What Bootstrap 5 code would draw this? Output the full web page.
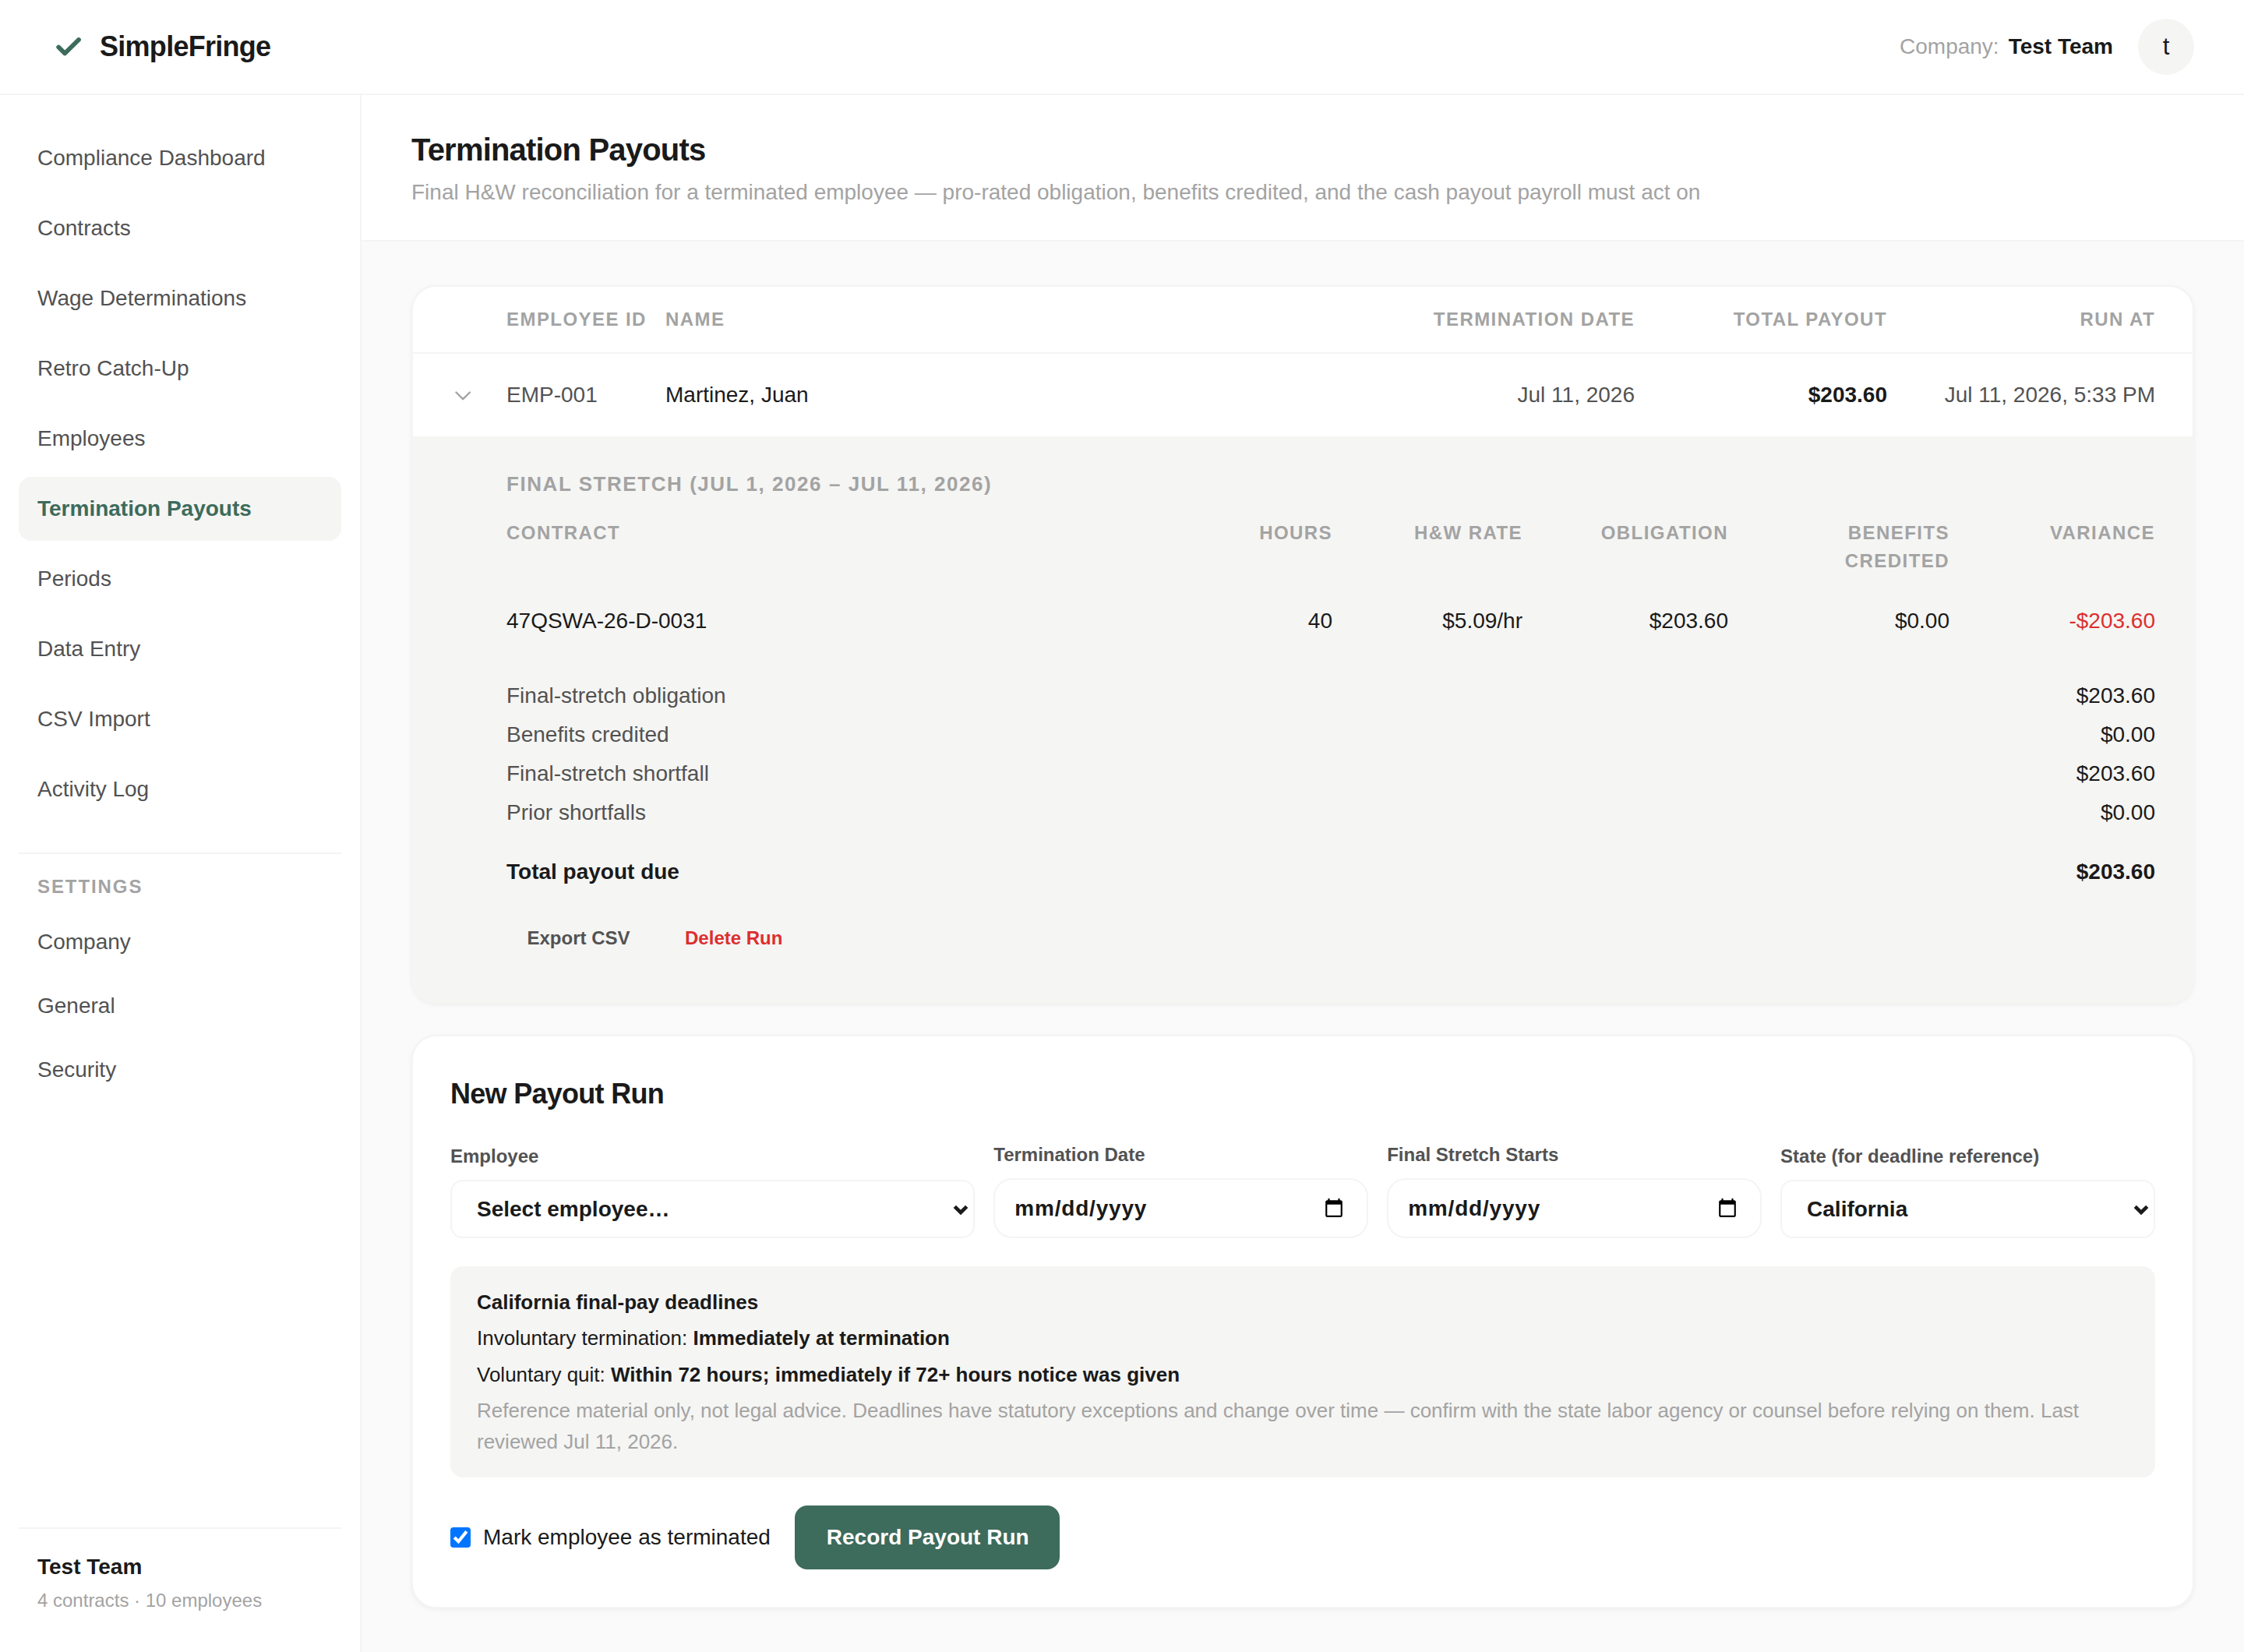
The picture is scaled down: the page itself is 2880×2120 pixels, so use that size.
<!DOCTYPE html>
<html lang="en">
<head>
  <meta charset="UTF-8" />
  <meta name="viewport" content="width=device-width, initial-scale=1" />
  <title>Termination Payouts - SimpleFringe</title>
  <link href="https://cdn.jsdelivr.net/npm/bootstrap@5.3.0/dist/css/bootstrap.min.css" rel="stylesheet" />
  <style>
    :root {
      --ink: #1a1a1a;
      --ink-2: #525252;
      --ink-3: #a3a3a3;
      --line: #f4f4f3;
      --soft: #f5f5f3;
      --green: #3d6b5c;
      --red: #dc2f2f;
    }
    body {
      font-family: "Liberation Sans", Arial, sans-serif;
      font-size: 28px;
      line-height: 42px;
      color: var(--ink);
      background: #fff;
      height: 2120px;
      overflow: hidden;
    }
    .ink-2 { color: var(--ink-2); }
    .ink-3 { color: var(--ink-3); }
    .ink-red { color: var(--red); }

    .topbar { height: 122px; padding: 0 64px; border-bottom: 2px solid var(--line); }
    .brand-name { font-size: 36px; letter-spacing: -.02em; }
    .brand-mark { width: 48px; height: 48px; margin-right: 16px; }
    .avatar { width: 72px; height: 72px; background: var(--soft); font-size: 31px; }

    .sidebar { width: 464px; padding: 40px 24px 0; border-right: 2px solid var(--line); }
    .sidebar .nav-link { color: var(--ink-2); padding: 20px 24px; border-radius: 16px; line-height: 42px; }
    .sidebar .nav-link.active { color: var(--green); background: var(--soft); font-weight: 700; }
    .main-nav { gap: 8px; }
    .settings-nav { margin-top: 40px; border-top: 2px solid var(--line); padding-top: 24px; }
    .settings-title { font-size: 24px; line-height: 36px; letter-spacing: .08em; padding: 0 24px; margin-bottom: 12px; }
    .team-box { height: 160px; padding: 28px 24px 0; border-top: 2px solid var(--line); }
    .team-box small { font-size: 24px; display: block; line-height: 36px; margin-top: 4px; }

    .page-head { height: 188px; padding: 42px 64px 0; border-bottom: 2px solid var(--line); }
    .page-head h1 { font-size: 40px; line-height: 56px; letter-spacing: -.02em; margin: 0 0 6px; }
    .page-body { background: #fafafa; padding: 56px 64px 54px; gap: 40px; }

    .panel { --bs-card-border-radius: 32px; --bs-card-inner-border-radius: 30px; border: 2px solid var(--line); box-shadow: 0 2px 6px rgba(0, 0, 0, .05); color: var(--ink); }

    .run-table, .contract-table { --bs-table-bg: transparent; --bs-table-color: var(--ink); table-layout: fixed; margin: 0; color: var(--ink); }
    .run-table > :not(caption) > * > *, .contract-table > :not(caption) > * > * { border: 0; padding: 0; }
    .run-table th, .contract-table th { font-size: 24px; line-height: 36px; letter-spacing: .06em; color: var(--ink-3); text-transform: uppercase; }
    .run-table th { height: 85px; vertical-align: middle; }
    .run-table thead { border-bottom: 2px solid var(--line); }
    .run-table > tbody > tr > td { height: 107px; vertical-align: middle; }

    .detail { background: var(--soft); height: 726px; padding: 41px 48px 0 120px; border-radius: 0 0 30px 30px; }
    .detail h2 { font-size: 26px; line-height: 40px; letter-spacing: .06em; color: var(--ink-3); text-transform: uppercase; margin: 0 0 25px; }
    .contract-table { margin-bottom: 54px; }
    .contract-table th { height: 110px; vertical-align: top; }
    .contract-table th.wrap-head { padding-left: 48px; }
    .contract-table td { line-height: 42px; }
    .sum-list { gap: 8px; }
    .sum-total { margin-top: 34px; }
    .detail-actions { margin-top: 38px; gap: 16px; }
    .detail-actions .btn { font-size: 24px; line-height: 36px; font-weight: 700; padding: 8px 28px 8px 26.5px; border: 0; }

    .new-run { padding: 48px; }
    .new-run h2 { font-size: 36px; line-height: 51px; letter-spacing: -.02em; margin: 0 0 35px; }
    .field-row { display: grid; grid-template-columns: 1.4fr 1fr 1fr 1fr; gap: 24px; align-items: end; margin-bottom: 36px; }
    .field-row .form-label { display: block; font-size: 24px; line-height: 36px; font-weight: 700; color: var(--ink-2); margin-bottom: 12px; }
    /* native controls drawn at double size */
    .field-row select, .field-row input { zoom: 2; display: block; width: 100%; font-size: 14px; font-weight: 700; color: var(--ink); background: #fff; border: 1px solid var(--line); }
    .field-row select { height: 37.5px; line-height: 35.5px; padding: 0 0 0 16px; border-radius: 8px; appearance: none; }
    .field-row input { height: 38.5px; padding: 0 12px 0 12.5px; border-radius: 12px; letter-spacing: .4px; }
    .select-arrow { position: absolute; right: 7px; top: 27px; width: 22px; height: 22px; pointer-events: none; }

    .deadlines { background: var(--soft); border-radius: 16px; padding: 25.5px 34px; font-size: 26px; line-height: 40px; margin-bottom: 36px; }
    .deadlines p { margin: 0 0 6.5px; }
    .deadlines p:last-child { margin: 0; }
    .mark-box { zoom: 2; width: 13px; height: 13px; margin: 0; accent-color: #0075ff; }
    .btn-record { --bs-btn-bg: var(--green); --bs-btn-color: #fff; --bs-btn-border-width: 0; --bs-btn-border-radius: 16px; font-size: 28px; font-weight: 700; line-height: 42px; padding: 20px 39px 20px 41px; }
  </style>
</head>
<body class="d-flex flex-column">

<header class="topbar d-flex align-items-center justify-content-between flex-shrink-0">
  <div class="d-flex align-items-center">
    <svg class="brand-mark" viewBox="0 0 48 48" fill="none" stroke="#3d6b5c" stroke-width="5.8" stroke-linecap="round" stroke-linejoin="round"><path d="M11.2 24.5l8 8L37 15" /></svg>
    <span class="brand-name fw-bold">SimpleFringe</span>
  </div>
  <div class="d-flex align-items-center">
    <span class="ink-3" style="margin-right:12px">Company:</span>
    <span class="fw-bold" style="margin-right:32px">Test Team</span>
    <span class="avatar rounded-circle d-flex align-items-center justify-content-center">t</span>
  </div>
</header>

<div class="d-flex flex-grow-1">
  <aside class="sidebar d-flex flex-column flex-shrink-0">
    <nav class="main-nav nav flex-column">
      <a class="nav-link" href="#">Compliance Dashboard</a>
      <a class="nav-link" href="#">Contracts</a>
      <a class="nav-link" href="#">Wage Determinations</a>
      <a class="nav-link" href="#">Retro Catch-Up</a>
      <a class="nav-link" href="#">Employees</a>
      <a class="nav-link active" href="#">Termination Payouts</a>
      <a class="nav-link" href="#">Periods</a>
      <a class="nav-link" href="#">Data Entry</a>
      <a class="nav-link" href="#">CSV Import</a>
      <a class="nav-link" href="#">Activity Log</a>
    </nav>
    <nav class="settings-nav nav flex-column">
      <div class="settings-title fw-bold ink-3">SETTINGS</div>
      <a class="nav-link" href="#">Company</a>
      <a class="nav-link" href="#">General</a>
      <a class="nav-link" href="#">Security</a>
    </nav>
    <div class="team-box mt-auto">
      <div class="fw-bold">Test Team</div>
      <small class="ink-3">4 contracts · 10 employees</small>
    </div>
  </aside>

  <main class="flex-grow-1 d-flex flex-column">
    <div class="page-head">
      <h1 class="fw-bold">Termination Payouts</h1>
      <div class="ink-3">Final H&amp;W reconciliation for a terminated employee — pro-rated obligation, benefits credited, and the cash payout payroll must act on</div>
    </div>

    <div class="page-body flex-grow-1 d-flex flex-column">
      <section class="card panel">
        <table class="table run-table">
          <colgroup>
            <col style="width:120px"><col style="width:204px"><col><col style="width:500px"><col style="width:324px"><col style="width:392px">
          </colgroup>
          <thead>
            <tr>
              <th></th>
              <th>Employee ID</th>
              <th>Name</th>
              <th class="text-end">Termination Date</th>
              <th class="text-end">Total Payout</th>
              <th class="text-end" style="padding-right:48px">Run At</th>
            </tr>
          </thead>
          <tbody>
            <tr>
              <td>
                <svg class="d-block" style="margin-left:50px" width="28" height="28" viewBox="0 0 28 28" fill="none" stroke="#a3a3a3" stroke-width="2.4" stroke-linecap="round" stroke-linejoin="round"><path d="M5.5 10.5l8.7 8.7 8.7-8.7" /></svg>
              </td>
              <td class="ink-2">EMP-001</td>
              <td>Martinez, Juan</td>
              <td class="text-end ink-2">Jul 11, 2026</td>
              <td class="text-end fw-bold">$203.60</td>
              <td class="text-end ink-2" style="padding-right:48px">Jul 11, 2026, 5:33 PM</td>
            </tr>
          </tbody>
        </table>

        <div class="detail">
          <h2 class="fw-bold">Final stretch (Jul 1, 2026 – Jul 11, 2026)</h2>
          <table class="table contract-table">
            <colgroup>
              <col><col style="width:260px"><col style="width:244px"><col style="width:264px"><col style="width:284px"><col style="width:264px">
            </colgroup>
            <thead>
              <tr>
                <th>Contract</th>
                <th class="text-end">Hours</th>
                <th class="text-end">H&amp;W Rate</th>
                <th class="text-end">Obligation</th>
                <th class="text-end wrap-head">Benefits Credited</th>
                <th class="text-end">Variance</th>
              </tr>
            </thead>
            <tbody>
              <tr>
                <td>47QSWA-26-D-0031</td>
                <td class="text-end">40</td>
                <td class="text-end">$5.09/hr</td>
                <td class="text-end">$203.60</td>
                <td class="text-end">$0.00</td>
                <td class="text-end ink-red">-$203.60</td>
              </tr>
            </tbody>
          </table>

          <div class="sum-list d-flex flex-column">
            <div class="d-flex justify-content-between"><span class="ink-2">Final-stretch obligation</span><span>$203.60</span></div>
            <div class="d-flex justify-content-between"><span class="ink-2">Benefits credited</span><span>$0.00</span></div>
            <div class="d-flex justify-content-between"><span class="ink-2">Final-stretch shortfall</span><span>$203.60</span></div>
            <div class="d-flex justify-content-between"><span class="ink-2">Prior shortfalls</span><span>$0.00</span></div>
          </div>
          <div class="sum-total d-flex justify-content-between fw-bold"><span>Total payout due</span><span>$203.60</span></div>

          <div class="detail-actions d-flex">
            <button type="button" class="btn ink-2">Export CSV</button>
            <button type="button" class="btn ink-red">Delete Run</button>
          </div>
        </div>
      </section>

      <section class="card panel new-run">
        <h2 class="fw-bold">New Payout Run</h2>
        <form>
          <div class="field-row">
            <div>
              <label class="form-label" for="employee">Employee</label>
              <div class="position-relative">
                <select id="employee"><option>Select employee…</option></select>
                <svg class="select-arrow" viewBox="0 0 22 22" fill="none" stroke="#1a1a1a" stroke-width="4.6"><path d="M3.3 7.3L11 15l7.7-7.7" /></svg>
              </div>
            </div>
            <div>
              <label class="form-label" for="termDate">Termination Date</label>
              <input type="date" id="termDate" />
            </div>
            <div>
              <label class="form-label" for="stretchStart">Final Stretch Starts</label>
              <input type="date" id="stretchStart" />
            </div>
            <div>
              <label class="form-label" for="state">State (for deadline reference)</label>
              <div class="position-relative">
                <select id="state"><option>California</option></select>
                <svg class="select-arrow" viewBox="0 0 22 22" fill="none" stroke="#1a1a1a" stroke-width="4.6"><path d="M3.3 7.3L11 15l7.7-7.7" /></svg>
              </div>
            </div>
          </div>

          <div class="deadlines">
            <p class="fw-bold">California final-pay deadlines</p>
            <p>Involuntary termination: <b>Immediately at termination</b></p>
            <p>Voluntary quit: <b>Within 72 hours; immediately if 72+ hours notice was given</b></p>
            <p class="ink-3">Reference material only, not legal advice. Deadlines have statutory exceptions and change over time — confirm with the state labor agency or counsel before relying on them. Last reviewed Jul 11, 2026.</p>
          </div>

          <div class="d-flex align-items-center" style="gap:31px">
            <label class="d-flex align-items-center" style="gap:16px"><input type="checkbox" class="mark-box" checked /> Mark employee as terminated</label>
            <button type="button" class="btn btn-record">Record Payout Run</button>
          </div>
        </form>
      </section>
    </div>
  </main>
</div>

<script src="https://cdn.jsdelivr.net/npm/bootstrap@5.3.0/dist/js/bootstrap.bundle.min.js"></script>
</body>
</html>
